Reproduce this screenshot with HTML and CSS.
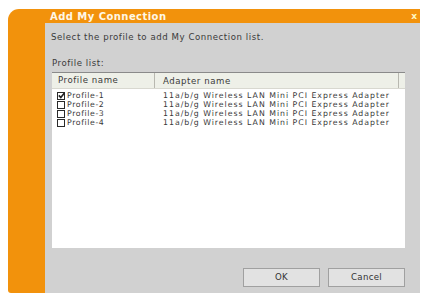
FILE: index.html
```html
<!DOCTYPE html>
<html>
<head>
<meta charset="utf-8">
<link rel="stylesheet" href="styles.css">
</head>
<body>
<div class="win">
  <div class="titlebar">
    <span class="title">Add My Connection</span>
    <span class="close">x</span>
  </div>
  <div class="main">
    <div class="band"></div>
    <div class="content">
      <div class="intro">Select the profile to add My Connection list.</div>
      <div class="label">Profile list:</div>
      <div class="list">
        <div class="head">
          <div class="c1">Profile name</div>
          <div class="c2">Adapter name</div>
          <div class="c3"></div>
        </div>
        <div class="row">
          <div class="c1"><span class="cb checked"><svg width="9" height="9" viewBox="0 0 9 9"><path d="M1.8 4.4 L3.8 6.6 L7.4 2" fill="none" stroke="#222" stroke-width="1.6"/></svg></span>Profile-1</div>
          <div class="c2">11a/b/g Wireless LAN Mini PCI Express Adapter</div>
        </div>
        <div class="row">
          <div class="c1"><span class="cb"></span>Profile-2</div>
          <div class="c2">11a/b/g Wireless LAN Mini PCI Express Adapter</div>
        </div>
        <div class="row">
          <div class="c1"><span class="cb"></span>Profile-3</div>
          <div class="c2">11a/b/g Wireless LAN Mini PCI Express Adapter</div>
        </div>
        <div class="row">
          <div class="c1"><span class="cb"></span>Profile-4</div>
          <div class="c2">11a/b/g Wireless LAN Mini PCI Express Adapter</div>
        </div>
      </div>
      <div class="buttons">
        <div class="btn">OK</div>
        <div class="btn">Cancel</div>
      </div>
    </div>
  </div>
</div>
</body>
</html>
```
FILE: styles.css
```css
html, body {
  margin: 0;
  padding: 0;
  background: #ffffff;
}
body {
  width: 423px;
  height: 295px;
  overflow: hidden;
  font-family: "DejaVu Sans", Tahoma, sans-serif;
}
.win {
  margin: 9px 3px 0 8px;
  width: 412px;
  height: 284px;
  background: #f2920c;
  border-radius: 11px 0 0 3px;
  display: flex;
  flex-direction: column;
}
.titlebar {
  height: 14px;
  display: flex;
  align-items: center;
  justify-content: space-between;
  padding: 0 3px 0 42px;
}
.title {
  color: #fff7e6;
  font-weight: bold;
  font-size: 10px;
  letter-spacing: 0.45px;
}
.close {
  color: #fff7c0;
  font-weight: bold;
  font-size: 9px;
  line-height: 9px;
}
.main {
  flex: 1;
  display: flex;
}
.band {
  width: 37px;
}
.content {
  flex: 1;
  background: #d1d1d1;
  padding: 9px 15px 6px 6px;
  display: flex;
  flex-direction: column;
  color: #3a3a3a;
  font-size: 8.6px;
  letter-spacing: 0.55px;
}
.intro {
  line-height: 11px;
}
.label {
  margin-top: 15px;
  line-height: 11px;
  padding-left: 1px;
}
.list {
  margin: 3px 0 0 1px;
  height: 176px;
  background: #ffffff;
  display: flex;
  flex-direction: column;
}
.head {
  height: 15px;
  display: flex;
  align-items: center;
  background: #eef0e8;
  border-top: 1px solid #8a8a8a;
  border-bottom: 1px solid #d8d8d0;
  margin-bottom: 2px;
}
.head .c1 {
  width: 96px;
  padding-left: 6px;
  border-right: 1px solid #b8b8b0;
  height: 15px;
  line-height: 15px;
}
.head .c2 {
  flex: 1;
  padding-left: 8px;
}
.head .c3 {
  width: 6px;
  height: 15px;
  border-left: 1px solid #b8b8b0;
}
.row {
  height: 9px;
  display: flex;
  align-items: center;
  line-height: 9px;
  font-size: 7.8px;
  letter-spacing: 0.98px;
}
.row .c1 {
  width: 98px;
  padding-left: 5px;
  display: flex;
  align-items: center;
  letter-spacing: 0.6px;
}
.row .c2 {
  padding-left: 8px;
}
.cb {
  width: 6px;
  height: 6px;
  border: 1.5px solid #2a2a2a;
  margin-right: 2px;
  display: inline-block;
  position: relative;
  background: #fff;
}
.cb svg {
  position: absolute;
  left: -1.5px;
  top: -1.5px;
}
.buttons {
  margin-top: auto;
  display: flex;
  justify-content: flex-end;
  gap: 8px;
}
.btn {
  width: 75px;
  height: 17px;
  border: 1px solid #a0a0a0;
  background: #e2e2e2;
  text-align: center;
  line-height: 17px;
  color: #333;
  font-size: 8.6px;
  letter-spacing: 0.3px;
}
```
